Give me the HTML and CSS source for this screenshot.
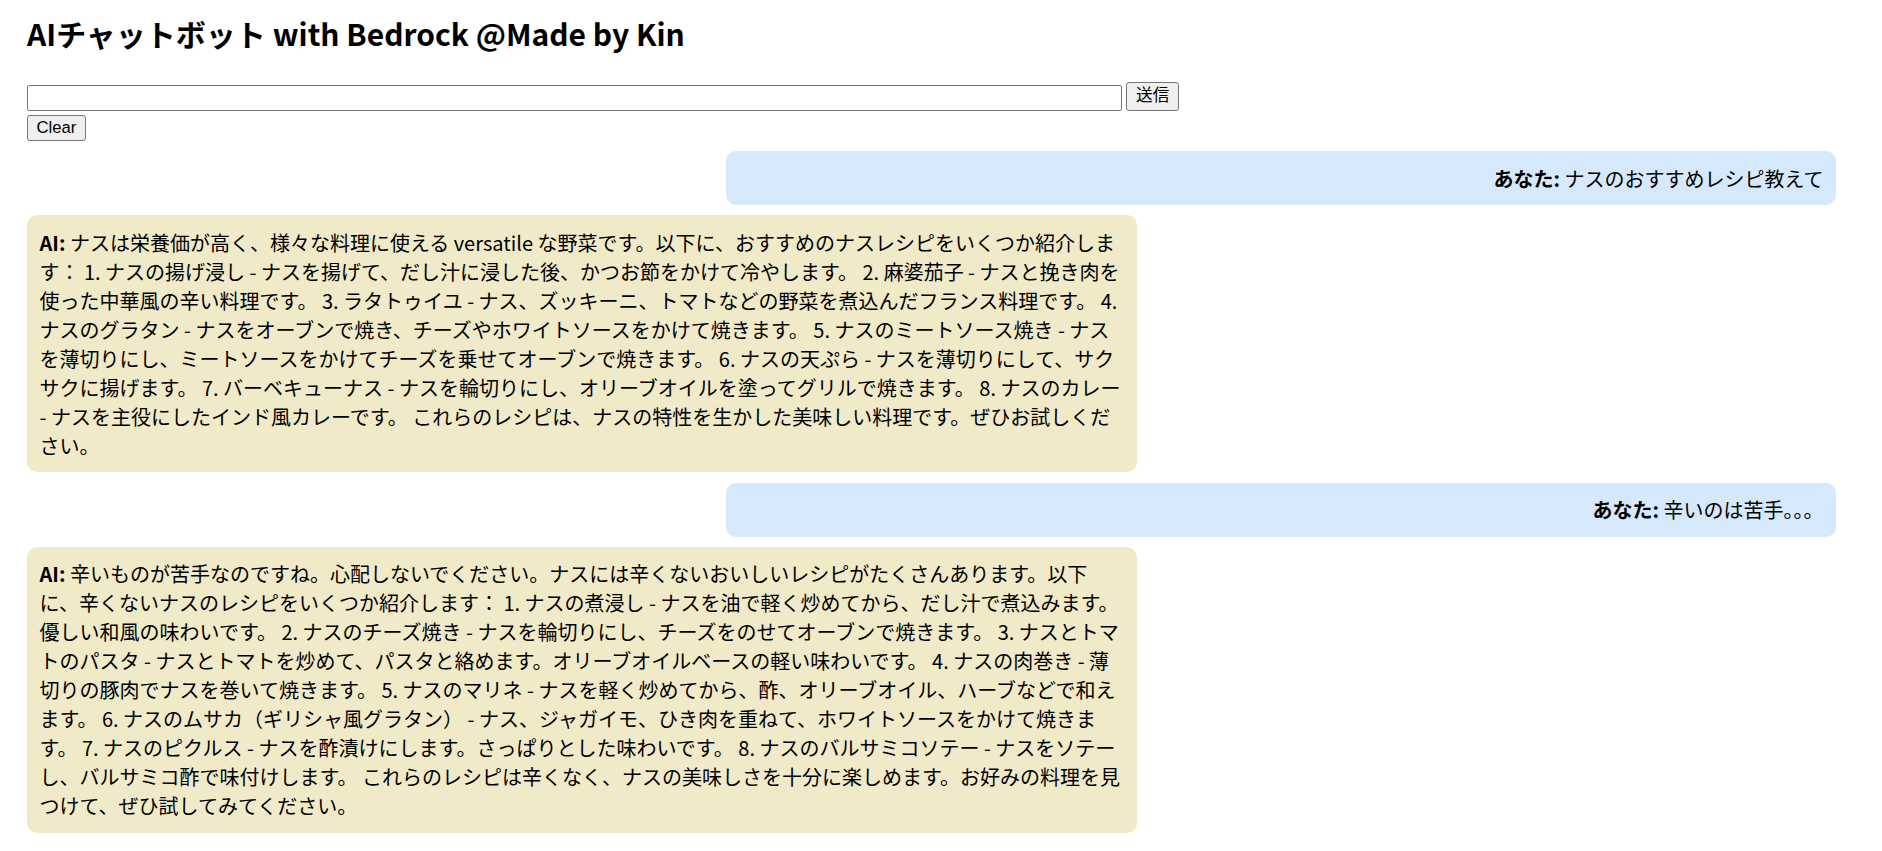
FILE: index.html
```html
<!DOCTYPE html>
<html lang="ja">
<head>
<meta charset="utf-8">
<title>AIチャットボット with Bedrock</title>
<link rel="stylesheet" href="styles.css">
</head>
<body>
<h1 class="title">AIチャットボット with Bedrock @Made by Kin</h1>
<div class="input-row">
  <input class="msg-input" type="text">
  <button class="btn btn-send">送信</button>
</div>
<div class="actions">
  <button class="btn btn-clear">Clear</button>
</div>
<div class="chat">
  <div class="bubble bubble-user"><strong>あなた:</strong> ナスのおすすめレシピ教えて</div>
  <div class="bubble bubble-ai"><strong>AI:</strong> ナスは栄養価が高く、様々な料理に使える versatile な野菜です。以下に、おすすめのナスレシピをいくつか紹介します： 1. ナスの揚げ浸し - ナスを揚げて、だし汁に浸した後、かつお節をかけて冷やします。 2. 麻婆茄子 - ナスと挽き肉を使った中華風の辛い料理です。 3. ラタトゥイユ - ナス、ズッキーニ、トマトなどの野菜を煮込んだフランス料理です。 4. ナスのグラタン - ナスをオーブンで焼き、チーズやホワイトソースをかけて焼きます。 5. ナスのミートソース焼き - ナスを薄切りにし、ミートソースをかけてチーズを乗せてオーブンで焼きます。 6. ナスの天ぷら - ナスを薄切りにして、サクサクに揚げます。 7. バーベキューナス - ナスを輪切りにし、オリーブオイルを塗ってグリルで焼きます。 8. ナスのカレー - ナスを主役にしたインド風カレーです。 これらのレシピは、ナスの特性を生かした美味しい料理です。ぜひお試しください。</div>
  <div class="bubble bubble-user"><strong>あなた:</strong> 辛いのは苦手。。。</div>
  <div class="bubble bubble-ai"><strong>AI:</strong> 辛いものが苦手なのですね。心配しないでください。ナスには辛くないおいしいレシピがたくさんあります。以下に、辛くないナスのレシピをいくつか紹介します： 1. ナスの煮浸し - ナスを油で軽く炒めてから、だし汁で煮込みます。優しい和風の味わいです。 2. ナスのチーズ焼き - ナスを輪切りにし、チーズをのせてオーブンで焼きます。 3. ナスとトマトのパスタ - ナスとトマトを炒めて、パスタと絡めます。オリーブオイルベースの軽い味わいです。 4. ナスの肉巻き - 薄切りの豚肉でナスを巻いて焼きます。 5. ナスのマリネ - ナスを軽く炒めてから、酢、オリーブオイル、ハーブなどで和えます。 6. ナスのムサカ（ギリシャ風グラタン） - ナス、ジャガイモ、ひき肉を重ねて、ホワイトソースをかけて焼きます。 7. ナスのピクルス - ナスを酢漬けにします。さっぱりとした味わいです。 8. ナスのバルサミコソテー - ナスをソテーし、バルサミコ酢で味付けします。 これらのレシピは辛くなく、ナスの美味しさを十分に楽しめます。お好みの料理を見つけて、ぜひ試してみてください。</div>
</div>
</body>
</html>
```
FILE: styles.css
```css
html, body {
  background: #ffffff;
}

body {
  margin: 0;
  padding: 11px 46px 20px 27px;
  font-family: "Noto Sans CJK JP", "Noto Sans", sans-serif;
  color: #000000;
}

.title {
  margin: 0 0 26.6px;
  font-size: 30px;
  font-weight: 700;
  line-height: normal;
}

.input-row {
  display: flex;
  align-items: flex-end;
  gap: 4px;
}

.msg-input {
  box-sizing: border-box;
  width: 60.53%;
  height: 26px;
  margin: 0;
  padding: 1px 3px;
  border: 1px solid #767676;
  border-radius: 2px;
  background: #ffffff;
  font: 16.67px "Liberation Sans", "Noto Sans CJK JP", sans-serif;
}

.btn {
  box-sizing: border-box;
  margin: 0;
  border: 1px solid #767676;
  border-radius: 3px;
  background: #efefef;
  color: #000000;
  font: 16.67px "Liberation Sans", "Noto Sans CJK JP", sans-serif;
  line-height: 1;
}

.btn-send {
  height: 29px;
  padding: 0 9px;
}

.actions {
  margin-top: 4.7px;
}

.btn-clear {
  display: block;
  height: 26px;
  padding: 0 8.5px;
}

.chat {
  display: flex;
  flex-direction: column;
  align-items: flex-start;
  gap: 10.2px;
  margin-top: 10px;
}

.bubble {
  box-sizing: border-box;
  width: 61.36%;
  padding: 12.5px;
  border-radius: 10px;
  font-size: 20px;
  line-height: normal;
}

.bubble strong {
  font-weight: 700;
}

.bubble-user {
  align-self: flex-end;
  background: #d6e8fc;
  text-align: right;
}

.bubble-ai {
  background: #f0eac8;
  text-align: left;
}
```
